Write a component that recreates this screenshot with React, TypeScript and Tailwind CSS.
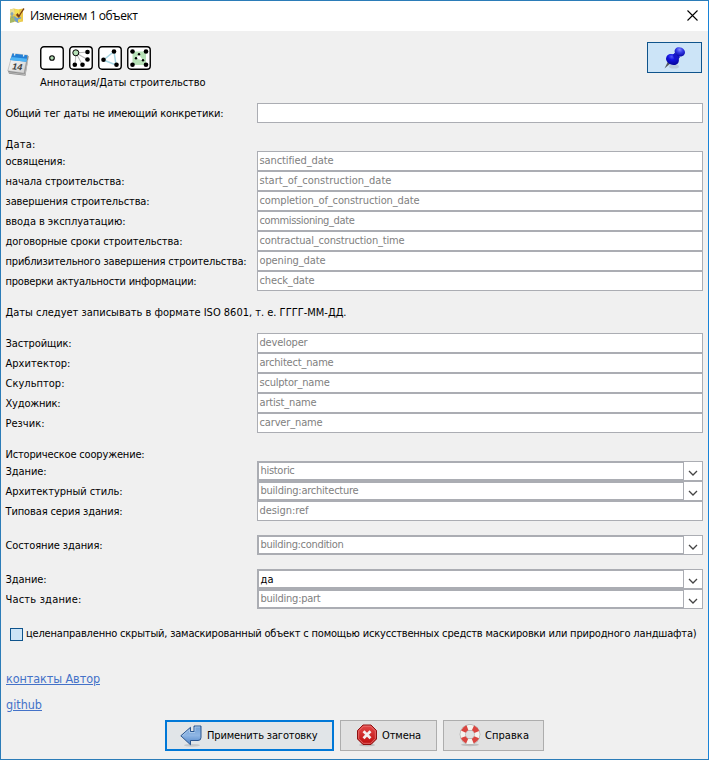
import { useLayoutEffect, useRef, useState, type ReactNode } from "react";

/** A single line of text whose tracking is adjusted so that it spans `w` pixels. */
function Line({ t, w, className = "" }: { t: string; w: number; className?: string }) {
  const ref = useRef<HTMLSpanElement>(null);
  const [spacing, setSpacing] = useState(0);
  useLayoutEffect(() => {
    if (!ref.current) return;
    const natural = ref.current.getBoundingClientRect().width - spacing * t.length;
    const next = (w - natural) / t.length;
    if (Math.abs(next - spacing) > 0.005) setSpacing(next);
  }, [t, w, spacing]);
  return (
    <span ref={ref} className={`inline-block whitespace-pre ${className}`} style={{ letterSpacing: `${spacing}px` }}>
      {t}
    </span>
  );
}

type Row = { label: string; lw: number; value?: string; vw?: number; combo?: boolean; filled?: boolean };

function Field({ value, vw = 0, combo, filled }: Row) {
  const text = value ? <Line t={value} w={vw} className={filled ? "text-black" : "text-[#808080]"} /> : null;
  if (combo) {
    return (
      <div className="flex h-5 w-[446px] bg-[#abadb3]">
        <div className={`my-0.5 ml-0.5 h-4 w-[424px] bg-white pl-[1.5px] ${filled ? "leading-[17px]" : "leading-[15px]"}`}>{text}</div>
        <div className="my-px ml-px flex h-[18px] w-[18px] items-center justify-center bg-white">
          <svg width="10" height="6" viewBox="0 0 10 6" className="mt-[3px]" fill="none" stroke="#444" strokeWidth="1.3">
            <path d="M1 1l4 4 4-4" />
          </svg>
        </div>
      </div>
    );
  }
  return <div className="h-5 w-[446px] border border-[#abadb3] bg-white pl-[1.5px] leading-[17px]">{text}</div>;
}

function Rows({ rows, className }: { rows: Row[]; className: string }) {
  return (
    <div className={className}>
      {rows.map((r) => (
        <div key={r.label} className="flex h-5">
          <div className="w-[251.5px] shrink-0 leading-[21px]">
            <Line t={r.label} w={r.lw} />
          </div>
          <Field {...r} />
        </div>
      ))}
    </div>
  );
}

const dates: Row[] = [
  { label: "освящения:", lw: 60, value: "sanctified_date", vw: 74 },
  { label: "начала строительства:", lw: 119, value: "start_of_construction_date", vw: 132 },
  { label: "завершения строительства:", lw: 144, value: "completion_of_construction_date", vw: 160 },
  { label: "ввода в эксплуатацию:", lw: 120, value: "commissioning_date", vw: 95 },
  { label: "договорные сроки строительства:", lw: 177, value: "contractual_construction_time", vw: 145 },
  { label: "приблизительного завершения строительства:", lw: 241, value: "opening_date", vw: 66 },
  { label: "проверки актуальности информации:", lw: 191, value: "check_date", vw: 55 },
];
const people: Row[] = [
  { label: "Застройщик:", lw: 66, value: "developer", vw: 48 },
  { label: "Архитектор:", lw: 65, value: "architect_name", vw: 74 },
  { label: "Скульптор:", lw: 59, value: "sculptor_name", vw: 70 },
  { label: "Художник:", lw: 55, value: "artist_name", vw: 57 },
  { label: "Резчик:", lw: 39, value: "carver_name", vw: 63 },
];
const historic: Row[] = [
  { label: "Здание:", lw: 41, value: "historic", vw: 34, combo: true },
  { label: "Архитектурный стиль:", lw: 117, value: "building:architecture", vw: 98, combo: true },
  { label: "Типовая серия здания:", lw: 117, value: "design:ref", vw: 49 },
];
const condition: Row[] = [{ label: "Состояние здания:", lw: 97, value: "building:condition", vw: 83, combo: true }];
const building: Row[] = [
  { label: "Здание:", lw: 41, value: "да", vw: 13, combo: true, filled: true },
  { label: "Часть здание:", lw: 76, value: "building:part", vw: 60, combo: true },
];

function AppIcon() {
  return (
    <svg width="16" height="16" viewBox="0 0 16 16">
      <path d="M1 1.500l4-1 4 1 5-1v13l-5 1-4-1-4 1z" fill="#ecc94c" />
      <path d="M1 1.500l4-1 1 5-5 3z" fill="#e8dc98" />
      <path d="M6 1l4 1v5l-4-1z" fill="#f4e052" />
      <path d="M1 10l4-2 2 3-2 3-4 1z" fill="#a5b766" />
      <path d="M5 8l3 2 4-1v4l-3 2-3-2z" fill="#6f9fcd" />
      <path d="M3 4v6M1.500 6h3" stroke="#6495bd" />
      <path d="M7 7l3 3 2-4 3.500-5-1-1L10 7 8.500 5z" fill="#7a3d12" />
      <path d="M9 11.500l3-1v3l-3 1z" fill="#f1d850" />
    </svg>
  );
}

function Calendar() {
  return (
    <svg width="22" height="25" viewBox="0 0 22 25">
      <defs>
        <linearGradient id="page" x1="0" y1="0" x2="1" y2="1">
          <stop offset="0" stopColor="#fff" />
          <stop offset="1" stopColor="#cfcfcf" />
        </linearGradient>
      </defs>
      <path d="M.8 18.500L2 21.800l16.500 2 3.200-19.500-1.500-1z" fill="#8a8a8a" />
      <path d="M5.500 1.500l15 1.700-3.500 18L.8 18.800z" fill="url(#page)" stroke="#a0a0a0" strokeWidth=".5" />
      <path d="M5.500 1.500l15 1.700-1.200 6.500L3.200 8z" fill="#2380d6" />
      <path d="M4.500 5l15.500 1.700-.7 3L3.200 8z" fill="#4fb4f4" />
      <path d="M8 1l-.6 2.500M17 2l-.6 2.500" stroke="#e7eef4" strokeWidth="1.300" />
      <path d="M1.800 20.600l16.200 2L20.800 8" fill="none" stroke="#c9c9c9" strokeWidth=".7" />
      <text x="0" y="0" transform="translate(4.500 17.300) rotate(6) skewX(-10)" fontSize="9" fontWeight="bold" fontFamily="Liberation Sans, sans-serif" fill="#3a3a3a">14</text>
    </svg>
  );
}

function Box({ children }: { children: ReactNode }) {
  return (
    <svg width="24" height="24" viewBox="0 0 24 24">
      <rect x=".75" y=".75" width="22.500" height="22.500" rx="3.200" fill="#fff" stroke="#000" strokeWidth="1.400" />
      {children}
    </svg>
  );
}

function Dots({ pts, r = 2.3 }: { pts: number[][]; r?: number }) {
  return <>{pts.map(([x, y]) => <circle key={`${x}-${y}`} cx={x} cy={y} r={r} />)}</>;
}

function TypeIcons() {
  return (
    <div className="flex gap-[5px]">
      <Box><circle cx="12" cy="12" r="2.300" fill="#b5dfb7" stroke="#000" strokeWidth="1.100" /></Box>
      <Box>
        <path d="M7 7l11.500-1M7 7l11.500 6.500M7 7l6.500 12M7 7l-1 12" stroke="#bbb" strokeWidth="1.100" />
        <circle cx="6.800" cy="6.800" r="3" fill="#b5dfb7" stroke="#000" strokeWidth="1" />
        <Dots pts={[[18.5, 6], [18.5, 13.5], [13.5, 18.7], [5.8, 18.7]]} />
      </Box>
      <Box>
        <path d="M16 5.500L5.500 14l12.500 5z" fill="none" stroke="#a6d7e5" strokeWidth="1.500" />
        <Dots pts={[[16, 5.5], [5.5, 13.7], [18.5, 18.7]]} />
      </Box>
      <Box>
        <path d="M5.500 5.500h13.500v13.500h-13.500z" fill="#b8e2b8" />
        <path d="M12 8.500l-3 4 7 2z" fill="#fff" />
        <Dots pts={[[5.5, 5.5], [19, 5.5], [19, 18.7], [5.5, 18.7]]} />
        <Dots pts={[[12, 8.3], [9, 12.3], [16, 14.3]]} r={1.2} />
      </Box>
    </div>
  );
}

function Pin() {
  return (
    <svg width="24" height="24" viewBox="0 0 24 24">
      <defs>
        <radialGradient id="pinHead" cx=".4" cy=".3" r=".7">
          <stop offset="0" stopColor="#8087ff" />
          <stop offset=".45" stopColor="#353ce6" />
          <stop offset="1" stopColor="#0909a8" />
        </radialGradient>
        <radialGradient id="pinBase" cx=".35" cy=".3" r=".7">
          <stop offset="0" stopColor="#5058f8" />
          <stop offset=".4" stopColor="#1212df" />
          <stop offset="1" stopColor="#0505a0" />
        </radialGradient>
      </defs>
      <ellipse cx="11" cy="20.500" rx="5" ry="2" fill="#aebdd0" opacity=".7" />
      <path d="M5 15.500L1.500 22.500 8 17z" fill="#555b60" />
      <path d="M12 7l5 4-3 4-6-5z" fill="#0b0bba" />
      <ellipse cx="9.500" cy="13.500" rx="6.700" ry="5.300" transform="rotate(25 9.500 13.500)" fill="url(#pinBase)" />
      <path d="M10 9l2-2 4 4-2 3q-3 0-4-5z" fill="#1515cb" />
      <ellipse cx="16.800" cy="5.800" rx="5.300" ry="4.500" transform="rotate(25 16.800 5.800)" fill="url(#pinHead)" />
    </svg>
  );
}

function ApplyIcon() {
  return (
    <svg width="22" height="22" viewBox="0 0 22 22">
      <defs>
        <linearGradient id="arrow" x1="0" y1="0" x2="0" y2="1">
          <stop offset="0" stopColor="#6f9fd6" />
          <stop offset=".5" stopColor="#8fb6e4" />
          <stop offset="1" stopColor="#4a80c6" />
        </linearGradient>
      </defs>
      <ellipse cx="12" cy="20.300" rx="8" ry="1.400" fill="#c4c8cb" />
      <path d="M14 1h7v11.500q0 3-3 3h-7.500v4.300L.8 10.800 10.500 2.300V6.500H14z" fill="url(#arrow)" stroke="#2b568f" strokeWidth="1" />
      <path d="M15 6V2h5M2.500 10.500l7-6v3H15" fill="none" stroke="#b9d2ee" strokeWidth=".7" />
    </svg>
  );
}

function CancelIcon() {
  return (
    <svg width="22" height="23" viewBox="0 0 22 23">
      <defs>
        <linearGradient id="stop" x1="0" y1="0" x2="0" y2="1">
          <stop offset="0" stopColor="#e34848" />
          <stop offset="1" stopColor="#bd0d0d" />
        </linearGradient>
      </defs>
      <ellipse cx="11" cy="21" rx="8" ry="1.500" fill="#bebebe" />
      <path d="M7 1h8l5.500 5.500v8.500L15 20.500H7L1.500 15V6.500z" fill="url(#stop)" stroke="#8e1111" />
      <path d="M7.400 2.200h7.200l4.700 4.700v7.600l-4.700 4.800H7.400l-4.700-4.800V6.900z" fill="none" stroke="#e97878" strokeWidth=".8" />
      <path d="M7.500 7.300l7 7M14.500 7.300l-7 7" stroke="#f4eeee" strokeWidth="2.700" />
    </svg>
  );
}

function HelpIcon() {
  return (
    <svg width="22" height="23" viewBox="0 0 22 23" fill="none">
      <ellipse cx="11" cy="20.800" rx="9" ry="1.500" fill="#bfbfbf" />
      <circle cx="11" cy="10.500" r="7.200" stroke="#999" strokeWidth="6.200" />
      <circle cx="11" cy="10.500" r="7.200" stroke="#f5f3ef" strokeWidth="5.200" />
      <circle cx="11" cy="10.500" r="7.200" stroke="#d94540" strokeWidth="5.200" strokeDasharray="5.650 5.660" strokeDashoffset="-2.830" />
    </svg>
  );
}

export default function App() {
  return (
    <div className="h-[760px] w-[709px] border border-[#2b7cb8] border-r-[#1883d7] bg-[#f0f0f0] font-['DejaVu_Sans_Condensed','DejaVu_Sans',sans-serif] text-[11px] text-black">
      <header className="flex h-[30px] items-center bg-white pl-2">
        <AppIcon />
        <div className="ml-[5px] grow font-['Open_Sans','Noto_Sans',sans-serif] text-[12px]">
          <Line t="Изменяем 1 объект" w={107.5} />
        </div>
        <svg width="11" height="11" viewBox="0 0 11 11" className="mr-[10px] -mt-px" stroke="#000" strokeWidth="1.100">
          <path d="M.5.500l10 10M10.500.500l-10 10" />
        </svg>
      </header>

      <div className="flex h-[71px] pt-[11px]">
        <div className="ml-[6px] mt-[10px] w-[33px]"><Calendar /></div>
        <div className="grow pt-[4px]">
          <TypeIcons />
          <div className="mt-[4px] leading-[18px]"><Line t="Аннотация/Даты строительство" w={165.5} /></div>
        </div>
        <button className="mr-[6px] flex h-[31px] w-[55px] items-center justify-center border border-[#0f548c] bg-[#cce4f7]"><Pin /></button>
      </div>

      <main className="pl-[4.5px]">
        <Rows className="mt-px" rows={[{ label: "Общий тег даты не имеющий конкретики:", lw: 218 }]} />
        <div className="mt-[11px] h-[17px] leading-[21px]"><Line t="Дата:" w={30} /></div>
        <Rows className="" rows={dates} />
        <div className="mt-[11px] h-[31px] leading-[21px]"><Line t="Даты следует записывать в формате ISO 8601, т. е. ГГГГ-ММ-ДД." w={341} /></div>
        <Rows className="" rows={people} />
        <div className="mt-[11px] h-[17px] leading-[21px]"><Line t="Историческое сооружение:" w={139} /></div>
        <Rows className="" rows={historic} />
        <Rows className="mt-[14px]" rows={condition} />
        <Rows className="mt-[14px]" rows={building} />

        <label className="mt-[15px] flex h-5 items-center pl-[4.5px]">
          <span className="size-[13px] border border-[#0f548c] bg-[#cce4f7]" />
          <Line className="ml-[3px] mt-px" t="целенаправленно скрытый, замаскированный объект с помощью искусственных средств маскировки или природного ландшафта)" w={670.5} />
        </label>

        <div className="mt-[25px] flex flex-col pl-[.5px] text-[12.5px] text-[#4472c8]">
          <a className="h-[26px] leading-[20px]"><Line t="контакты Автор" w={94} className="underline" /></a>
          <a className="h-[26px] leading-[20px]"><Line t="github" w={36} className="underline" /></a>
        </div>
      </main>

      <footer className="-mt-px flex gap-1.5 pl-[164px]">
        <button className="flex h-[31px] w-[169px] items-center border-2 border-[#0078d7] bg-[#e1e5e8] pl-[13px]">
          <ApplyIcon /><Line className="ml-[5px] mt-px" t="Применить заготовку" w={110.5} />
        </button>
        <button className="flex h-[31px] w-[97px] items-center border border-[#adadad] bg-[#e1e1e1] pl-[15px]">
          <CancelIcon /><Line className="ml-1 mt-px" t="Отмена" w={39} />
        </button>
        <button className="flex h-[31px] w-[101px] items-center border border-[#adadad] bg-[#e1e1e1] pl-[15px]">
          <HelpIcon /><Line className="ml-1 mt-px" t="Справка" w={44} />
        </button>
      </footer>
    </div>
  );
}
